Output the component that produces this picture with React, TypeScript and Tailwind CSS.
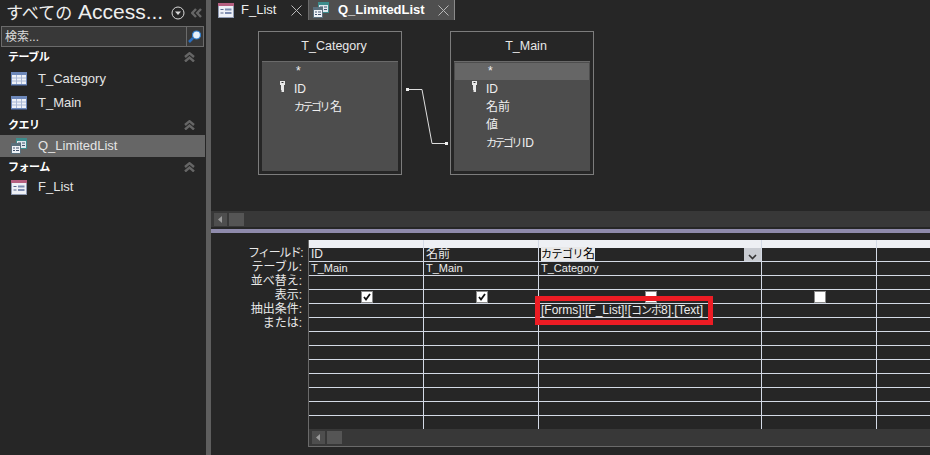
import React from "react";

const JP = "font-['Liberation_Sans','Noto_Sans_CJK_JP',sans-serif]";

function Kana({ children }: { children: React.ReactNode }) {
  return <span className="text-[11px] tracking-[-2.5px]">{children}</span>;
}

function TableIcon() {
  return (
    <svg width="16" height="14" viewBox="0 0 16 14" className="shrink-0">
      <rect x="0" y="0" width="16" height="13" fill="#6d88ba" />
      <rect x="1" y="3" width="14" height="9" fill="#eef1f8" />
      <path d="M1 6h14M1 9h14M5.5 3v9M10.5 3v9" stroke="#a9b8d6" strokeWidth="1" fill="none" />
      <rect x="0" y="13" width="16" height="1" fill="#3f4f70" />
    </svg>
  );
}

function QueryIcon() {
  return (
    <svg width="16" height="16" viewBox="0 0 16 16" className="shrink-0">
      <rect x="5" y="0" width="11" height="11" fill="#3d8c8c" />
      <rect x="6" y="3" width="9" height="7" fill="#dfe8ee" />
      <path d="M7 5h3M7 7.5h3M11 5h3M11 7.5h3" stroke="#44546e" strokeWidth="1" />
      <rect x="0" y="5" width="10" height="11" fill="#5a6f7c" />
      <rect x="1" y="8" width="8" height="7" fill="#eef1f6" />
      <path d="M2 10h2M2 12.5h2M5 10h3M5 12.5h3" stroke="#44546e" strokeWidth="1" />
    </svg>
  );
}

function FormIcon() {
  return (
    <svg width="16" height="15" viewBox="0 0 16 15" className="shrink-0">
      <rect x="0" y="0" width="16" height="15" fill="#8f9ab2" />
      <rect x="0" y="0" width="16" height="3" fill="#b65f80" />
      <rect x="1" y="3" width="14" height="11" fill="#eef0f6" />
      <path d="M2.5 6.5h3M2.5 10h3" stroke="#56648a" strokeWidth="1" />
      <rect x="7" y="5.5" width="6.5" height="2" fill="#7c8bb0" />
      <rect x="7" y="9" width="6.5" height="2" fill="#7c8bb0" />
    </svg>
  );
}

function Chevrons() {
  return (
    <svg width="11" height="10" viewBox="0 0 11 10">
      <path d="M1 5L5.5 1.2 10 5M1 9.5L5.5 5.5 10 9.5" stroke="#666666" strokeWidth="2.4" fill="none" />
    </svg>
  );
}

function CloseX() {
  return (
    <svg width="11" height="11" viewBox="0 0 11 11" className="shrink-0">
      <path d="M0.5 0.5l10 10M10.5 0.5l-10 10" stroke="#b8b8b8" strokeWidth="1" fill="none" />
    </svg>
  );
}

function Group({ label }: { label: string }) {
  return (
    <div className="flex items-center justify-between h-5 pl-[8px] pr-[10px] text-white text-[11px] tracking-[-0.5px] font-bold">
      <span>{label}</span>
      <Chevrons />
    </div>
  );
}

function NavItem({ icon, label, active, h = "h-6" }: { icon: React.ReactNode; label: string; active?: boolean; h?: string }) {
  return (
    <div className={`flex items-center pl-[11px] text-[13px] text-[#e4e4e4] ${h} ${active ? "bg-[#666666]" : ""}`}>
      <span className="w-[27px] flex">{icon}</span>
      <span>{label}</span>
    </div>
  );
}

type F = { t: React.ReactNode; id: string; key2?: boolean };

function FieldList({ rows, highlight }: { rows: F[]; highlight?: boolean }) {
  return (
    <div className="mx-[3px] mb-[3px] flex-1 bg-[#4d4d4d] border-t border-[#6a6a6a] pt-[1px] text-[12px] text-[#efefef]">
      <div className={`h-[17px] pl-[33px] mx-[1px] leading-[17px] ${highlight ? "bg-[#666666]" : ""}`}>*</div>
      {rows.map((r) => (
        <div key={r.id} className="relative h-[18px] leading-[18px] pl-[32px] first:mt-[1px]">
          {r.key2 && (
            <svg width="5" height="11" viewBox="0 0 5 11" className="absolute left-[18px] top-[1px]">
              <path d="M0 0h5v4H4v7H1.5V9H1V4H0z" fill="#e8e8e8" />
              <rect x="1.5" y="1" width="2" height="1" fill="#333" />
            </svg>
          )}
          {r.t}
        </div>
      ))}
    </div>
  );
}

function TableBox({ title, left, rows, highlight }: { title: string; left: string; rows: F[]; highlight?: boolean }) {
  return (
    <div className={`absolute top-[11px] w-[144px] h-[144px] border border-[#7c7c7c] flex flex-col ${left}`}>
      <div className="h-[29px] shrink-0 text-center text-[12.5px] text-[#e8e8e8] leading-[29px] pl-[8px]">{title}</div>
      <FieldList rows={rows} highlight={highlight} />
    </div>
  );
}

const colClasses = ["w-[115px]", "w-[115px]", "w-[223px]", "w-[115px]", "w-[60px]"];

function Cell({ i, children, className = "" }: { i: number; children?: React.ReactNode; className?: string }) {
  return (
    <div className={`relative shrink-0 h-full border-r-[1px] border-[#d4dae6] px-[2px] leading-[13px] whitespace-nowrap ${colClasses[i]} ${className}`}>
      {children}
    </div>
  );
}

function Check({ checked }: { checked?: boolean }) {
  return (
    <div className="absolute left-1/2 top-[1px] ml-[1px] -translate-x-1/2 w-[12px] h-[12px] bg-white border border-[#8a8a8a] flex items-center justify-center">
      {checked && (
        <svg width="8" height="8" viewBox="0 0 8 8">
          <path d="M1 4l2 2.5L7 1" stroke="#111" strokeWidth="1.8" fill="none" />
        </svg>
      )}
    </div>
  );
}

function Row({ children }: { children?: React.ReactNode }) {
  return <div className="flex h-[14px] shrink-0 border-b border-[#d4dae6]">{children}</div>;
}

function ScrollLeft() {
  return (
    <div className="flex items-center gap-[2px] pl-[3px]">
      <div className="w-[13px] h-[13px] bg-[#4e4e4e] flex items-center justify-center">
        <svg width="5" height="7" viewBox="0 0 5 7">
          <path d="M4 0v7L0 3.5z" fill="#9a9a9a" />
        </svg>
      </div>
      <div className="w-[15px] h-[13px] bg-[#555555]" />
    </div>
  );
}

function EmptyCells() {
  return (
    <>
      {colClasses.map((c, i) => (
        <Cell key={c + i} i={i} />
      ))}
    </>
  );
}

export default function App() {
  const labels: React.ReactNode[] = [
    <span className="tracking-[-1.5px]">フィールド:</span>,
    "テーブル:",
    "並べ替え:",
    "表示:",
    "抽出条件:",
    "または:",
  ];
  return (
    <div className={`relative flex w-[930px] h-[455px] overflow-hidden bg-[#262626] text-[12px] ${JP}`}>
      {/* navigation pane */}
      <div className="w-[205px] shrink-0 flex flex-col bg-[#262626]">
        <div className="h-[26px] flex items-center pl-[6px] shrink-0">
          <span className="w-[165px] shrink-0 text-[21px] leading-[24px] text-[#efefef] whitespace-nowrap">
            <span className="text-[17px]">すべての</span> Access...
          </span>
          <svg width="14" height="14" viewBox="0 0 14 14" className="shrink-0">
            <circle cx="7" cy="7" r="6" stroke="#d8d8d8" strokeWidth="1" fill="none" />
            <path d="M4 5.5h6L7 9z" fill="#d8d8d8" />
          </svg>
          <svg width="11" height="10" viewBox="0 0 11 10" className="ml-[6px] shrink-0">
            <path d="M5 1L1.2 5 5 9M10 1L6.2 5 10 9" stroke="#666666" strokeWidth="2.4" fill="none" />
          </svg>
        </div>
        <div className="ml-[1px] mr-[1px] h-[21px] shrink-0 border border-[#6b6b6b] bg-[#383838] flex items-center">
          <span className="flex-1 pl-[3px] text-[12px] text-[#dcdcdc]">検索...</span>
          <div className="w-[17px] h-full border-l border-[#6b6b6b] flex items-center justify-center">
            <svg width="14" height="14" viewBox="0 0 14 14">
              <path d="M5 8L1 12" stroke="#2a6fc0" strokeWidth="2.5" />
              <circle cx="8.5" cy="5" r="4" fill="#e6f0fa" stroke="#2f7fd0" strokeWidth="1.2" />
            </svg>
          </div>
        </div>
        <Group label="テーブル" />
        <NavItem icon={<TableIcon />} label="T_Category" />
        <NavItem icon={<TableIcon />} label="T_Main" />
        <Group label="クエリ" />
        <NavItem icon={<QueryIcon />} label="Q_LimitedList" active h="h-[22px]" />
        <Group label="フォーム" />
        <NavItem icon={<FormIcon />} label="F_List" h="h-[20px]" />
      </div>
      {/* splitter */}
      <div className="w-[5px] shrink-0 ml-[1px] bg-[#5e5e5e]" />
      {/* document area */}
      <div className="flex-1 min-w-0 flex flex-col">
        {/* tabs */}
        <div className="h-[20px] shrink-0 flex text-[13px] text-[#ececec]">
          <div className="w-[97px] flex items-center pl-[7px]">
            <FormIcon />
            <span className="ml-[7px] flex-1">F_List</span>
            <span className="mr-[6px] flex"><CloseX /></span>
          </div>
          <div className="w-[147px] flex items-center pl-[4px] bg-[#4f4f4f] border-r border-[#8a8a8a] border-l border-l-[#6a6a6a] font-bold">
            <QueryIcon />
            <span className="ml-[9px] flex-1 text-white">Q_LimitedList</span>
            <span className="mr-[5px] flex"><CloseX /></span>
          </div>
        </div>
        {/* upper diagram pane */}
        <div className="relative h-[191px] shrink-0">
          <TableBox
            title="T_Category"
            left="left-[47px]"
            rows={[{ id: "id", t: "ID", key2: true }, { id: "c", t: <><Kana>カテゴリ</Kana><span className="ml-[2px]">名</span></> }]}
          />
          <TableBox
            title="T_Main"
            left="left-[239px]"
            highlight
            rows={[
              { id: "id", t: "ID", key2: true },
              { id: "n", t: "名前" },
              { id: "v", t: "値" },
              { id: "c", t: <><Kana>カテゴリ</Kana><span className="ml-[2px]">ID</span></> },
            ]}
          />
          <svg width="50" height="64" viewBox="0 0 50 64" className="absolute left-[195px] top-[64px]">
            <path d="M2 5.5H16L26 59.5H40" stroke="#dedede" strokeWidth="1" fill="none" />
            <rect x="0" y="4" width="3" height="3" fill="#efefef" />
            <rect x="39" y="58" width="3" height="3" fill="#efefef" />
          </svg>
        </div>
        <div className="h-[16px] shrink-0 bg-[#383838] flex items-center">
          <ScrollLeft />
        </div>
        <div className="h-[2px] shrink-0 bg-[#262626]" />
        <div className="h-[4px] shrink-0 bg-[#8f8bac]" />
        {/* design grid */}
        <div className="flex-1 min-h-0 flex pt-[7px]">
          <div className="w-[97px] shrink-0 pt-[7px] pr-[6px] text-right text-[12px] text-[#e8e8e8]">
            {labels.map((l, i) => (
              <div key={i} className="h-[14px] leading-[13px] whitespace-nowrap">{l}</div>
            ))}
          </div>
          <div className="flex-1 min-w-0 h-[207px] border-l border-b border-[#6a6a6a] overflow-hidden flex flex-col text-[12px] text-[#ececec]">
            <div className="flex h-[8px] shrink-0 bg-[#eef0f4]">
              <EmptyCells />
            </div>
            <Row>
              <Cell i={0}>ID</Cell>
              <Cell i={1}>名前</Cell>
              <Cell i={2}>
                <span className="bg-[#e8e8e8] text-black"><span className="tracking-[-0.5px] text-[11px]">カテゴリ</span>名</span>
                <div className="absolute right-0 top-0 w-[17px] h-[13px] bg-[#c9ccd2] flex items-end justify-center pb-[1px]">
                  <svg width="9" height="6" viewBox="0 0 9 6">
                    <path d="M1 1l3.5 3.5L8 1" stroke="#333" strokeWidth="1.6" fill="none" />
                  </svg>
                </div>
              </Cell>
              <Cell i={3} />
              <Cell i={4} />
            </Row>
            <Row>
              <Cell i={0} className="text-[11px]">T_Main</Cell>
              <Cell i={1} className="text-[11px]">T_Main</Cell>
              <Cell i={2} className="text-[11px]">T_Category</Cell>
              <Cell i={3} />
              <Cell i={4} />
            </Row>
            <Row>
              <EmptyCells />
            </Row>
            <Row>
              <Cell i={0}><Check checked /></Cell>
              <Cell i={1}><Check checked /></Cell>
              <Cell i={2}><Check /></Cell>
              <Cell i={3}><Check /></Cell>
              <Cell i={4} />
            </Row>
            <Row>
              <Cell i={0} />
              <Cell i={1} />
              <Cell i={2}>[Forms]![F_List]![<span className="text-[11px] tracking-[-1px]">コンボ</span>8].[Text]</Cell>
              <Cell i={3} />
              <Cell i={4} />
            </Row>
            {[0, 1, 2, 3, 4, 5, 6].map((r) => (
              <Row key={r}>
                <EmptyCells />
              </Row>
            ))}
            <div className="flex h-[13px] shrink-0">
              <EmptyCells />
            </div>
            <div className="h-[17px] shrink-0 bg-[#383838] flex items-center">
              <ScrollLeft />
            </div>
          </div>
        </div>
      </div>
      {/* red highlight annotation */}
      <div className="absolute left-[535px] top-[296px] w-[178px] h-[29px] border-[5px] border-[#ed1c24] pointer-events-none" />
    </div>
  );
}
